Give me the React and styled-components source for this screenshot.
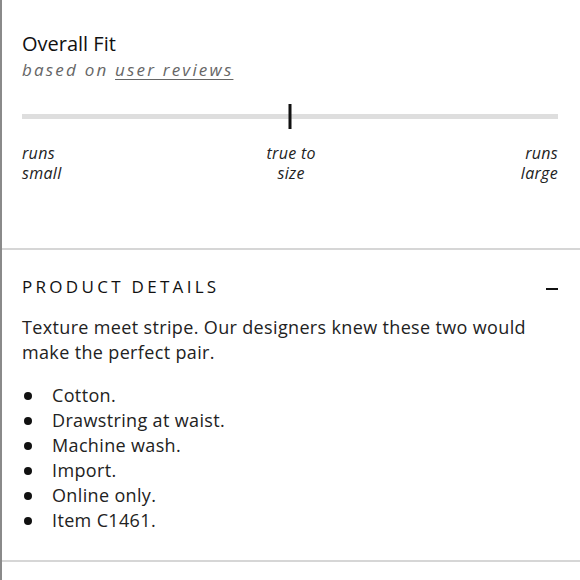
import React from "react";
import styled, { createGlobalStyle } from "styled-components";

const GlobalStyle = createGlobalStyle`
  html, body {
    margin: 0;
    padding: 0;
    background: #fff;
  }
  body {
    font-family: "Open Sans", "Noto Sans", sans-serif;
    color: #111;
  }
`;

const Page = styled.div`
  width: 580px;
  height: 580px;
  box-sizing: border-box;
  border-left: 2px solid #8a8a8a;
  overflow: hidden;
`;

const FitSection = styled.section`
  height: 250px;
  box-sizing: border-box;
  padding: 30px 22px 0 20px;
  border-bottom: 2px solid #d6d6d6;
`;

const Title = styled.h2`
  margin: 0;
  font-size: 20px;
  font-weight: 400;
  line-height: 27px;
  color: #111;
`;

const Subtitle = styled.p`
  margin: 1px 0 0;
  font-size: 17px;
  font-style: italic;
  letter-spacing: 2.2px;
  line-height: 24px;
  color: #666;

  a {
    color: #666;
    text-decoration: underline;
    text-underline-offset: 3px;
  }
`;

const Scale = styled.div`
  margin-top: 32px;
`;

const Track = styled.div`
  position: relative;
  height: 5px;
  background: #dedede;
`;

const Marker = styled.div`
  position: absolute;
  top: -10px;
  width: 3px;
  height: 25px;
  background: #111;
  transform: translateX(-50%);
`;

const Labels = styled.div`
  display: flex;
  justify-content: space-between;
  margin-top: 24px;
`;

const Label = styled.span`
  font-size: 16px;
  font-style: italic;
  line-height: 20px;
  letter-spacing: 0.3px;
  color: #222;
  text-align: ${(p) => p.$align || "left"};
`;

const Details = styled.section`
  padding: 0 22px 0 20px;
  height: 312px;
  box-sizing: border-box;
  border-bottom: 2px solid #d6d6d6;
`;

const DetailsHeader = styled.div`
  display: flex;
  justify-content: space-between;
  align-items: center;
  padding-top: 27px;
  height: 20px;
`;

const DetailsTitle = styled.h3`
  margin: 0;
  font-size: 17px;
  font-weight: 400;
  line-height: 20px;
  letter-spacing: 3.3px;
  color: #111;
`;

const Minus = styled.span`
  width: 12px;
  height: 2px;
  background: #111;
  margin-top: 3px;
`;

const Text = styled.p`
  margin: 18px 0 0;
  font-size: 18px;
  line-height: 25px;
  letter-spacing: 0.35px;
  color: #222;
`;

const List = styled.ul`
  list-style: none;
  margin: 18px 0 0;
  padding: 0;
`;

const Item = styled.li`
  position: relative;
  padding-left: 30px;
  font-size: 18px;
  line-height: 25px;
  letter-spacing: 0.35px;
  color: #222;

  &::before {
    content: "";
    position: absolute;
    left: 2px;
    top: 9px;
    width: 8px;
    height: 8px;
    border-radius: 50%;
    background: #111;
  }
`;

const items = [
  "Cotton.",
  "Drawstring at waist.",
  "Machine wash.",
  "Import.",
  "Online only.",
  "Item C1461.",
];

export default function App() {
  const fit = 50;
  return (
    <>
      <GlobalStyle />
      <Page>
        <FitSection>
          <Title>Overall Fit</Title>
          <Subtitle>
            based on <a>user reviews</a>
          </Subtitle>
          <Scale>
            <Track>
              <Marker style={{ left: `${fit}%` }} />
            </Track>
            <Labels>
              <Label>
                runs
                <br />
                small
              </Label>
              <Label $align="center">
                true to
                <br />
                size
              </Label>
              <Label $align="right">
                runs
                <br />
                large
              </Label>
            </Labels>
          </Scale>
        </FitSection>
        <Details>
          <DetailsHeader>
            <DetailsTitle>PRODUCT DETAILS</DetailsTitle>
            <Minus />
          </DetailsHeader>
          <Text>
            Texture meet stripe. Our designers knew these two would make the
            perfect pair.
          </Text>
          <List>
            {items.map((t) => (
              <Item key={t}>{t}</Item>
            ))}
          </List>
        </Details>
      </Page>
    </>
  );
}
